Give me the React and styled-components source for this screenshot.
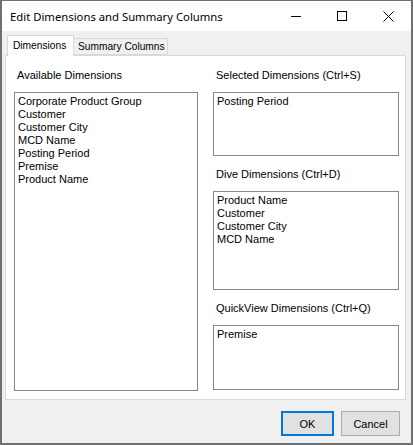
import React from "react";
import styled, { createGlobalStyle } from "styled-components";

const Global = createGlobalStyle`
  html, body { margin: 0; padding: 0; background: #ffffff; }
  * { box-sizing: border-box; }
`;

const Window = styled.div`
  width: 413px;
  height: 445px;
  border-style: solid;
  border-color: #707070;
  border-width: 1px 2px 2px 2px;
  display: flex;
  flex-direction: column;
  background: #f0f0f0;
  font-family: "Liberation Sans", Arial, sans-serif;
  font-size: 11px;
  color: #000;
`;

const TitleBar = styled.div`
  height: 30px;
  background: #ffffff;
  display: flex;
  align-items: center;
`;

const Title = styled.div`
  flex: 1;
  padding-left: 8px;
  font-family: "Noto Sans", "Open Sans", sans-serif;
  font-size: 11.3px;
  color: #000;
  white-space: nowrap;
`;

const CaptionButton = styled.div`
  width: 46px;
  height: 30px;
  display: flex;
  align-items: center;
  justify-content: center;
`;

const Body = styled.div`
  flex: 1;
  display: flex;
  flex-direction: column;
  padding-top: 4px;
`;

const TabArea = styled.div`
  margin: 0 5px 0 3px;
  display: flex;
  flex-direction: column;
`;

const TabStrip = styled.div`
  height: 20px;
  display: flex;
  align-items: flex-end;
  padding-left: 2px;
  position: relative;
  z-index: 1;
`;

const Tab = styled.div`
  height: ${(p) => (p.$active ? "21px" : "17px")};
  margin-bottom: ${(p) => (p.$active ? "-1px" : "0")};
  width: ${(p) => p.$w}px;
  background: ${(p) => (p.$active ? "#ffffff" : "#f0f0f0")};
  border: 1px solid #d9d9d9;
  border-bottom: ${(p) => (p.$active ? "none" : "1px solid #d9d9d9")};
  border-left: ${(p) => (p.$active ? "1px solid #d9d9d9" : "none")};
  display: flex;
  align-items: center;
  padding-left: ${(p) => (p.$active ? "5px" : "4px")};
  padding-bottom: ${(p) => (p.$active ? "2px" : "0")};
  font-size: 10.2px;
  white-space: nowrap;
`;

const Panel = styled.div`
  height: 345px;
  background: #ffffff;
  border: 1px solid #d9d9d9;
  display: grid;
  grid-template-columns: 184px 186px;
  column-gap: 15px;
  padding: 0 0 8px 8px;
`;

const Column = styled.div`
  display: flex;
  flex-direction: column;
`;

const Label = styled.div`
  height: ${(p) => p.$h || 36}px;
  padding-top: ${(p) => p.$pt || 13}px;
  padding-left: 3px;
  line-height: 13px;
  white-space: nowrap;
`;

const ListBox = styled.div`
  height: ${(p) => (p.$h ? `${p.$h}px` : "auto")};
  flex: ${(p) => (p.$h ? "none" : "1")};
  border: 1px solid #828790;
  background: #ffffff;
  padding: 2px 3px;
`;

const Item = styled.div`
  line-height: 13px;
  height: 13px;
  white-space: nowrap;
`;

const Footer = styled.div`
  display: flex;
  justify-content: flex-end;
  gap: 7px;
  padding: 11px 11px 0 0;
`;

const Button = styled.div`
  width: ${(p) => p.$w}px;
  height: 25px;
  background: #e1e1e1;
  border: ${(p) => (p.$default ? "2px solid #0078d7" : "1px solid #adadad")};
  display: flex;
  align-items: center;
  justify-content: center;
  font-size: 11px;
`;

const List = ({ items, h }) => (
  <ListBox $h={h}>
    {items.map((t) => (
      <Item key={t}>{t}</Item>
    ))}
  </ListBox>
);

export default function App() {
  return (
    <>
      <Global />
      <Window>
        <TitleBar>
          <Title>Edit Dimensions and Summary Columns</Title>
          <CaptionButton>
            <svg width="10" height="10" viewBox="0 0 10 10">
              <path d="M0 5.5H10" stroke="#000" strokeWidth="1" />
            </svg>
          </CaptionButton>
          <CaptionButton>
            <svg width="10" height="10" viewBox="0 0 10 10">
              <rect x="0.5" y="0.5" width="9" height="9" fill="none" stroke="#000" strokeWidth="1" />
            </svg>
          </CaptionButton>
          <CaptionButton>
            <svg width="11" height="11" viewBox="0 0 11 11">
              <path d="M0.5 0.5L10.5 10.5M10.5 0.5L0.5 10.5" stroke="#000" strokeWidth="1" />
            </svg>
          </CaptionButton>
        </TitleBar>
        <Body>
          <TabArea>
            <TabStrip>
              <Tab $active $w={67}>Dimensions</Tab>
              <Tab $w={94}>Summary Columns</Tab>
            </TabStrip>
            <Panel>
              <Column>
                <Label>Available Dimensions</Label>
                <List
                  items={[
                    "Corporate Product Group",
                    "Customer",
                    "Customer City",
                    "MCD Name",
                    "Posting Period",
                    "Premise",
                    "Product Name",
                  ]}
                />
              </Column>
              <Column>
                <Label>Selected Dimensions (Ctrl+S)</Label>
                <List h={64} items={["Posting Period"]} />
                <Label $h={35} $pt={12}>Dive Dimensions (Ctrl+D)</Label>
                <List h={99} items={["Product Name", "Customer", "Customer City", "MCD Name"]} />
                <Label $h={35} $pt={12}>QuickView Dimensions (Ctrl+Q)</Label>
                <List h={65} items={["Premise"]} />
              </Column>
            </Panel>
          </TabArea>
          <Footer>
            <Button $default $w={53}>OK</Button>
            <Button $w={59}>Cancel</Button>
          </Footer>
        </Body>
      </Window>
    </>
  );
}
